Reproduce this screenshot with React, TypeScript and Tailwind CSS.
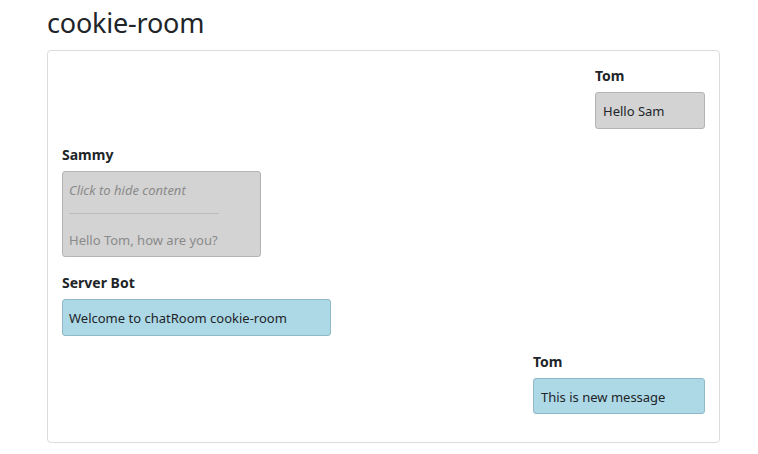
import React from "react";

export default function App() {
  const font = { fontFamily: '"Segoe UI", "Noto Sans", "Open Sans", sans-serif' };
  return (
    <div className="min-h-[454px] w-[758px] bg-white text-[#212529]" style={font}>
      <div className="pl-[47px] pr-[38px]">
        <h1 className="pt-[3px] text-[27px] leading-[40px] font-normal text-[#212529] tracking-[-0.2px]">cookie-room</h1>
        <div className="mt-[7px] rounded-[4px] border border-[#dcdcdc] px-[14px] pt-[15px] pb-[28px] flex flex-col gap-[16px]">
          <div className="flex justify-end">
            <div className="flex flex-col items-start">
              <div className="text-[14px] leading-[20px] font-bold">Tom</div>
              <div className="mt-[6px] w-[110px] h-[37px] rounded-[3px] border border-[#b4b4b4] bg-[#d3d3d3] pl-[7px] pt-[3px] flex items-center text-[13px]">Hello Sam</div>
            </div>
          </div>
          <div className="flex flex-col items-start">
            <div className="text-[14px] leading-[20px] font-bold">Sammy</div>
            <div className="mt-[6px] w-[199px] h-[86px] rounded-[3px] border border-[#b4b4b4] bg-[#d3d3d3] pl-[6px] pt-[8px] text-[13px] text-[#8a8a8a]">
              <div className="italic leading-[20px]">Click to hide content</div>
              <div className="mt-[13px] w-[150px] border-t border-[#bcbcbc]"></div>
              <div className="mt-[16px] leading-[20px]">Hello Tom, how are you?</div>
            </div>
          </div>
          <div className="flex flex-col items-start">
            <div className="text-[14px] leading-[20px] font-bold">Server Bot</div>
            <div className="mt-[6px] w-[269px] h-[37px] rounded-[3px] border border-[#8fb9c6] bg-[#add8e6] pl-[6px] pt-[3px] flex items-center text-[13px]">Welcome to chatRoom cookie-room</div>
          </div>
          <div className="flex justify-end">
            <div className="flex flex-col items-start">
              <div className="text-[14px] leading-[20px] font-bold">Tom</div>
              <div className="mt-[6px] w-[172px] h-[36px] rounded-[3px] border border-[#8fb9c6] bg-[#add8e6] pl-[7px] pt-[3px] flex items-center text-[13px]">This is new message</div>
            </div>
          </div>
        </div>
      </div>
    </div>
  );
}
